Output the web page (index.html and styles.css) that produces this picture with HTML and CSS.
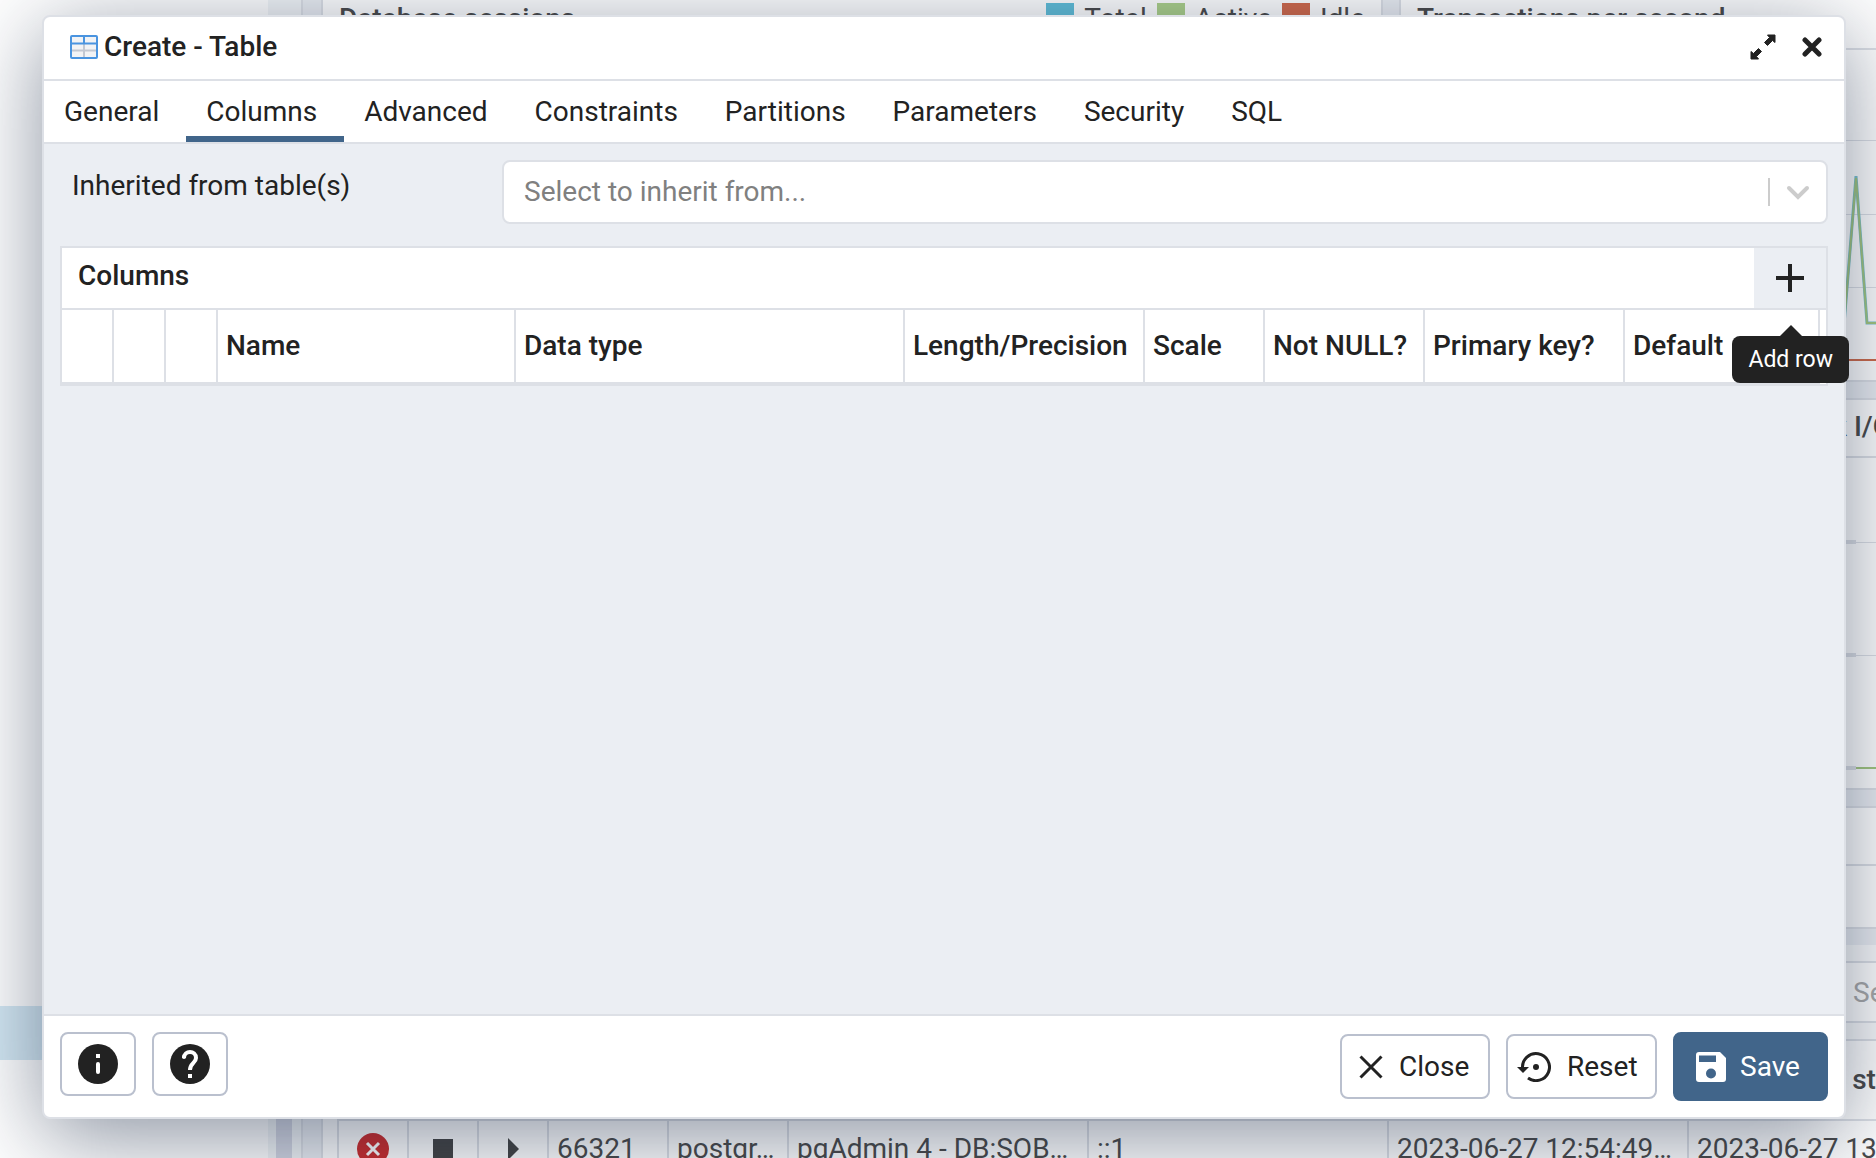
FILE: index.html
```html
<!DOCTYPE html>
<html lang="en">

<head>
  <meta charset="UTF-8">
  <meta name="viewport" content="width=device-width, initial-scale=1.0">
  <title>Create - Table</title>
  <link rel="stylesheet" href="styles.css">
</head>

<body>

  <!-- Dashboard behind the dialog -->
  <div class="workspace">
    <aside class="sidebar">
      <div class="selected-node"></div>
    </aside>
    <div class="splitter">
      <div class="scroll-thumb"></div>
    </div>

    <main class="dashboard">
      <div class="chart-row top-row">
        <section class="card">
          <div class="card-header">
            <h2>Database sessions</h2>
            <div class="legend">
              <span class="swatch total"></span><span class="legend-label">Total</span>
              <span class="swatch active"></span><span class="legend-label">Active</span>
              <span class="swatch idle"></span><span class="legend-label">Idle</span>
            </div>
          </div>
        </section>
        <section class="card transactions">
          <div class="card-header">
            <h2>Transactions per second</h2>
          </div>
          <svg class="chart" width="40" height="330" viewBox="0 0 40 330">
            <path d="M0 90.500H40M0 164.500H40M0 237.500H40" stroke="#dde0e6" fill="none" />
            <path d="M8 275L20 126L31 273H40" stroke="#7bc3cf" stroke-width="3" fill="none" />
            <path d="M8 275L20 128L31 273H40" stroke="#a3c77f" stroke-width="2" fill="none" />
            <path d="M0 310H40" stroke="#cf6a4a" stroke-width="2" />
          </svg>
        </section>
      </div>

      <div class="chart-row">
        <section class="card"></section>
        <section class="card block-io">
          <div class="card-header">
            <h2>Block I/O</h2>
          </div>
          <svg class="chart" width="40" height="330" viewBox="0 0 40 330">
            <path d="M0 84H20M0 197H20M0 310H20" stroke="#dde0e6" stroke-width="4" />
            <path d="M20 84.500H40M20 197.500H40" stroke="#dde0e6" />
            <path d="M20 310H40" stroke="#a3c77f" stroke-width="2" />
          </svg>
        </section>
      </div>

      <section class="card activity">
        <div class="card-header"></div>
        <div class="activity-tabs"></div>
        <div class="activity-gap"></div>
        <div class="search-row">
          <input class="search" type="text" placeholder="Search" aria-label="Search">
        </div>
        <table class="sessions">
          <colgroup>
            <col class="w-70"><col class="w-70"><col class="w-70"><col class="w-120"><col class="w-120"><col class="w-300"><col class="w-300"><col class="w-300"><col class="w-300">
          </colgroup>
          <thead>
            <tr>
              <td></td><td></td><td></td><td></td><td></td><td></td><td></td><td></td>
              <th>Transaction start</th>
            </tr>
          </thead>
          <tbody>
            <tr>
              <td><svg class="row-icon" width="32" height="32" viewBox="0 0 32 32"><circle cx="16" cy="16" r="16" fill="#cc2c2c" /><path d="M10 10L22 22M22 10L10 22" stroke="#fff" stroke-width="3" /></svg></td>
              <td><svg class="row-icon" width="32" height="32" viewBox="0 0 32 32"><path d="M6 6H26V26H6Z" fill="#444" /></svg></td>
              <td><svg class="row-icon" width="32" height="32" viewBox="0 0 32 32"><path d="M11 5L22 16L11 27Z" fill="#444" /></svg></td>
              <td>66321</td>
              <td>postgr…</td>
              <td>pgAdmin 4 - DB:SOB…</td>
              <td>::1</td>
              <td>2023-06-27 12:54:49…</td>
              <td>2023-06-27 13</td>
            </tr>
          </tbody>
        </table>
      </section>
    </main>
  </div>

  <!-- Create table dialog -->
  <div class="dialog" role="dialog" aria-labelledby="dialog-title">
    <header class="dialog-header">
      <svg class="table-icon" width="28" height="24" viewBox="0 0 28 24">
        <rect x="1" y="1" width="26" height="22" rx="1" fill="#f2f3f5" />
        <path d="M2 15.500H26M14 9V22" stroke="#c3c8d2" stroke-width="2" />
        <path d="M1 8.500H27M14 1V8" stroke="#4a94e0" stroke-width="2" />
        <rect x="1" y="1" width="26" height="22" rx="1" fill="none" stroke="#4a94e0" stroke-width="2" />
      </svg>
      <h1 id="dialog-title">Create - Table</h1>
      <button class="icon-button" aria-label="Maximize">
        <svg width="26" height="26" viewBox="0 0 26 26" fill="#222" stroke="#222" stroke-linejoin="round">
          <path d="M17.500 1H25V8.500L22.500 6.500L17.500 11.500L14.500 8.500L19.500 3.500Z" />
          <path d="M8.500 25H1V17.500L3.500 19.500L8.500 14.500L11.500 17.500L6.500 22.500Z" />
        </svg>
      </button>
      <button class="icon-button" aria-label="Close dialog">
        <svg width="20" height="20" viewBox="0 0 20 20">
          <path d="M3 3L17 17M17 3L3 17" stroke="#222" stroke-width="5" stroke-linecap="round" />
        </svg>
      </button>
    </header>

    <div class="tabs" role="tablist">
      <button class="tab" role="tab">General</button>
      <button class="tab selected" role="tab" aria-selected="true">Columns</button>
      <button class="tab" role="tab">Advanced</button>
      <button class="tab" role="tab">Constraints</button>
      <button class="tab" role="tab">Partitions</button>
      <button class="tab" role="tab">Parameters</button>
      <button class="tab" role="tab">Security</button>
      <button class="tab" role="tab">SQL</button>
    </div>

    <div class="dialog-body">
      <div class="form-row">
        <label for="inherits">Inherited from table(s)</label>
        <div class="select-box">
          <select id="inherits">
            <option>Select to inherit from...</option>
          </select>
          <svg class="select-arrow" width="42" height="28" viewBox="0 0 42 28">
            <path d="M1 0V28" stroke="#ccc" stroke-width="2" />
            <path d="M21 10L30 19L39 10" fill="none" stroke="#ccc" stroke-width="4" stroke-linecap="round" />
          </svg>
        </div>
      </div>

      <div class="grid">
        <div class="grid-header">
          <h2>Columns</h2>
          <button class="add-row" aria-label="Add row">
            <svg width="28" height="28" viewBox="0 0 28 28">
              <path d="M14 0V28M0 14H28" stroke="#222" stroke-width="4" />
            </svg>
          </button>
          <div class="tooltip" role="tooltip">Add row</div>
        </div>
        <table class="columns-table">
          <colgroup>
            <col class="w-52"><col class="w-52"><col class="w-52"><col class="w-298"><col><col class="w-240"><col class="w-120"><col class="w-160"><col class="w-200"><col class="w-195">
          </colgroup>
          <thead>
            <tr>
              <th></th>
              <th></th>
              <th></th>
              <th>Name</th>
              <th>Data type</th>
              <th>Length/Precision</th>
              <th>Scale</th>
              <th>Not NULL?</th>
              <th>Primary key?</th>
              <th>Default</th>
            </tr>
          </thead>
        </table>
      </div>
    </div>

    <footer class="dialog-footer">
      <button class="button help-button" aria-label="Information">
        <svg width="40" height="40" viewBox="0 0 40 40">
          <circle cx="20" cy="20" r="20" fill="#222" />
          <path d="M20 20V28" stroke="#fff" stroke-width="4" stroke-linecap="round" />
          <path d="M18 10H22V14H18Z" fill="#fff" />
        </svg>
      </button>
      <button class="button help-button" aria-label="Help">
        <svg width="40" height="40" viewBox="0 0 40 40">
          <circle cx="20" cy="20" r="20" fill="#222" />
          <path d="M14 14C14 6 26 6 26 14C26 19 20 19 20 26" fill="none" stroke="#fff" stroke-width="4" />
          <circle cx="14" cy="13" r="2" fill="#fff" />
          <path d="M18 30H22V34H18Z" fill="#fff" />
        </svg>
      </button>
      <div class="actions">
        <button class="button close-button">
          <svg width="24" height="24" viewBox="0 0 24 24">
            <path d="M1.500 1.500L22.500 22.500M22.500 1.500L1.500 22.500" stroke="#222" stroke-width="3" />
          </svg>
          Close
        </button>
        <button class="button reset-button">
          <svg width="34" height="30" viewBox="0 0 34 30">
            <path d="M5.500 16A13.500 13.500 0 1 1 11 26" fill="none" stroke="#222" stroke-width="3" />
            <path d="M0 15H12L6 21Z" fill="#222" />
            <circle cx="19" cy="15" r="3" fill="#222" />
          </svg>
          Reset
        </button>
        <button class="button save-button">
          <svg width="30" height="30" viewBox="0 0 30 30">
            <path d="M3 0H24L30 6V27Q30 30 27 30H3Q0 30 0 27V3Q0 0 3 0Z" fill="#fff" />
            <path d="M3 3.500H20V10H3Z" fill="#41658a" />
            <circle cx="15" cy="21.500" r="5" fill="#41658a" />
          </svg>
          Save
        </button>
      </div>
    </footer>
  </div>

</body>

</html>
```

FILE: styles.css
```css
* {
  box-sizing: border-box;
}

body {
  margin: 0;
  height: 100vh;
  overflow: hidden;
  position: relative;
  font-family: Roboto, 'Liberation Sans', sans-serif;
  font-size: 28px;
  line-height: 42px;
  color: #222;
  background-color: #fff;
}

h1,
h2 {
  margin: 0;
  font-size: 28px;
  font-weight: 500;
}

button {
  font: inherit;
  color: inherit;
  background: none;
  border: none;
  padding: 0;
  cursor: pointer;
}

svg {
  display: block;
  flex: none;
}

/* Dashboard */
.workspace {
  display: flex;
  height: 100%;
  overflow: hidden;
  color: #4a4a4a;
}

.sidebar {
  width: 268px;
  flex: none;
  padding-top: 1006px;
}

.selected-node {
  height: 54px;
  background-color: #d4e8f3;
}

.splitter {
  width: 33px;
  flex: none;
  padding: 1000px 9px 0 8px;
  background-color: #f2f5f7;
}

.scroll-thumb {
  height: 200px;
  background-color: #d3d6e2;
}

.dashboard {
  flex: 1;
  min-width: 0;
  display: flex;
  flex-direction: column;
  gap: 16px;
  padding-left: 18px;
  border-left: 2px solid #dde0e6;
  background-color: #ebeef3;
}

.chart-row {
  display: flex;
  flex: none;
  gap: 16px;
  height: 392px;
}

.top-row {
  height: 382px;
}

.card {
  flex: 1;
  display: flex;
  flex-direction: column;
  border: 2px solid #dde0e6;
  background-color: #fff;
  overflow: hidden;
}

.top-row .card {
  border-top: none;
}

.card-header {
  display: flex;
  justify-content: space-between;
  height: 58px;
  flex: none;
  padding: 6px 16px;
  border-bottom: 2px solid #dde0e6;
  white-space: nowrap;
}

.top-row .card-header {
  height: 50px;
  padding: 0 16px;
}

.legend {
  display: flex;
  gap: 10px;
}

.top-row h2,
.legend-label {
  line-height: 38px;
}

.swatch {
  width: 28px;
  height: 28px;
  margin-top: 3px;
}

.total {
  background-color: #61bfd9;
}

.active {
  background-color: #add18a;
}

.idle {
  background-color: #d2694a;
}

.card.transactions {
  flex: 0 0 477px;
  border-right: none;
}

.card.block-io {
  flex: 0 0 117px;
  border-right: none;
}

.chart {
  margin-left: auto;
}

.activity {
  flex: none;
  border-right: none;
}

.activity-tabs {
  height: 63px;
  border-bottom: 2px solid #dde0e6;
}

.activity-gap {
  height: 16px;
  background-color: #ebeef3;
}

.search-row {
  padding: 16px 0;
  background-color: #fafbfc;
}

.search {
  display: block;
  width: 300px;
  height: 62px;
  margin-left: auto;
  margin-right: -259px;
  padding: 0 16px;
  border: 2px solid #dde0e6;
  font: inherit;
}

.search::placeholder {
  color: #aaa;
}

.sessions {
  width: 1650px;
  margin-left: 14px;
  table-layout: fixed;
  border-collapse: collapse;
  white-space: nowrap;
}

.sessions th,
.sessions td {
  border: 2px solid #dde0e6;
  height: 80px;
  padding: 0 8px;
  text-align: left;
  font-weight: 400;
}

.sessions th {
  font-weight: 500;
}

.sessions thead td {
  border-left: none;
  border-right: none;
}

.sessions tbody td {
  height: 58px;
}

.row-icon {
  margin: 0 auto;
}

/* Dialog */
.dialog {
  position: absolute;
  inset: 15px 30px 39px 42px;
  display: flex;
  flex-direction: column;
  border: 2px solid #dde0e6;
  border-radius: 8px;
  background-color: #fff;
  box-shadow: 0 18px 88px rgba(22, 38, 66, 0.5);
}

.dialog-header {
  display: flex;
  align-items: center;
  height: 64px;
  padding: 0 22px 2px 26px;
  border-bottom: 2px solid #dde0e6;
}

.table-icon {
  margin-right: 6px;
}

.dialog-header h1 {
  flex: 1;
}

.icon-button {
  margin-left: 26px;
}

.tabs {
  display: flex;
  height: 63px;
  border-bottom: 2px solid #dde0e6;
}

.tab {
  padding: 6px 27px 0 20px;
  border-bottom: 6px solid transparent;
}

.tab.selected {
  border-bottom-color: #41658a;
}

.dialog-body {
  flex: 1;
  padding: 16px;
  background-color: #ebeef3;
}

.form-row {
  display: flex;
  margin-bottom: 22px;
}

.form-row label {
  flex: 0 0 442px;
  padding: 5px 12px;
}

.select-box {
  position: relative;
  flex: 1;
}

select {
  display: block;
  appearance: none;
  width: 100%;
  height: 64px;
  padding: 0 20px;
  border: 2px solid #dde0e6;
  border-radius: 8px;
  background-color: #fff;
  color: #808080;
  font: inherit;
}

.select-arrow {
  position: absolute;
  top: 18px;
  right: 18px;
  pointer-events: none;
}

.grid {
  border: 2px solid #dde0e6;
}

.grid-header {
  position: relative;
  display: flex;
  justify-content: space-between;
  height: 62px;
  border-bottom: 2px solid #dde0e6;
  background-color: #fff;
}

.grid-header h2 {
  padding: 7px 16px;
}

.add-row {
  display: flex;
  align-items: center;
  justify-content: center;
  width: 72px;
  background-color: #ebeef3;
}

.tooltip {
  position: absolute;
  top: 88px;
  right: -23px;
  padding: 8px 16px;
  border-radius: 8px;
  background-color: #222;
  color: #fff;
  font-size: 23px;
  line-height: 31px;
}

.tooltip::before {
  content: '';
  position: absolute;
  left: 50%;
  bottom: 100%;
  margin-left: -11px;
  border: 11px solid transparent;
  border-top: none;
  border-bottom-color: #222;
}

.columns-table {
  width: 100%;
  padding-right: 6px;
  table-layout: fixed;
  border-collapse: separate;
  border-spacing: 0;
  background-color: #fff;
}

.columns-table th {
  height: 74px;
  padding: 0 8px;
  border-right: 2px solid #dde0e6;
  border-bottom: 2px solid #dde0e6;
  text-align: left;
  font-weight: 500;
  white-space: nowrap;
}

.dialog-footer {
  display: flex;
  align-items: flex-start;
  gap: 16px;
  height: 103px;
  padding: 16px;
  border-top: 2px solid #dde0e6;
}

.actions {
  display: flex;
  align-items: center;
  gap: 16px;
  margin-left: auto;
}

.button {
  display: flex;
  align-items: center;
  gap: 16px;
  width: 150px;
  height: 65px;
  border: 2px solid #bac0ce;
  border-radius: 8px;
}

.help-button {
  justify-content: center;
  width: 76px;
  height: 64px;
}

.close-button {
  padding-left: 17px;
}

.reset-button {
  width: 151px;
  padding-left: 9px;
}

.save-button {
  width: 155px;
  height: 69px;
  gap: 14px;
  padding-left: 21px;
  border-color: #41658a;
  background-color: #41658a;
  color: #fff;
}

/* Column widths */
.w-52 {
  width: 52px;
}

.w-70 {
  width: 70px;
}

.w-120 {
  width: 120px;
}

.w-160 {
  width: 160px;
}

.w-195 {
  width: 195px;
}

.w-200 {
  width: 200px;
}

.w-240 {
  width: 240px;
}

.w-298 {
  width: 298px;
}

.w-300 {
  width: 300px;
}
```
